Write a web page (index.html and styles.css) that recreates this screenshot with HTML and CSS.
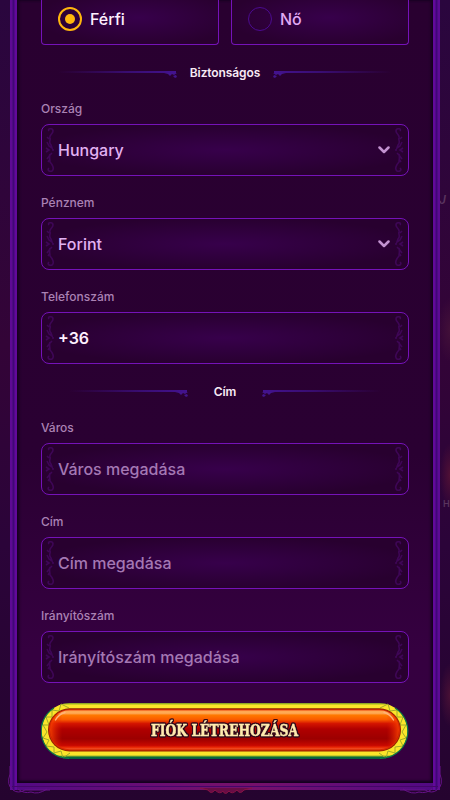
FILE: index.html
```html
<!DOCTYPE html>
<html lang="hu">
<head>
<meta charset="utf-8">
<title>Fiók létrehozása</title>
<link rel="stylesheet" href="styles.css">
</head>
<body>
<svg class="defs" aria-hidden="true">
  <symbol id="scroll" viewBox="0 0 10 44">
    <path d="M4 3C2 0 8 0 8 3C8 6 4 7 5 10C6 12 3 14 6 17L7 20L4 18L2 14M4 11L2 9M1 20L4 22L1 24M7 22H9M7 25L5 27L2 31M5 26C4 29 5 32 5 34C7 36 10 41 7 43C4 44 2 42 4 40M5 31L3 34"/>
  </symbol>
  <symbol id="chevron" viewBox="0 0 12 8"><path d="M1.500 1.500L6 6L10.500 1.500"/></symbol>
  <symbol id="rule" viewBox="0 0 120 7">
    <rect width="118" height="2" fill="url(#fade)"/>
    <path d="M106 2H119L116 4L114 3L112 5L110 3ZM115 5L118 4L119 6L117 7Z" fill="#43148c"/>
  </symbol>
  <linearGradient id="fade"><stop offset="0" stop-color="#3d1082" stop-opacity="0"/><stop offset=".6" stop-color="#3d1082" stop-opacity=".8"/><stop offset="1" stop-color="#431290"/></linearGradient>
</svg>
<span class="ghost ghost-one">J</span><span class="ghost ghost-two">H</span>
<main class="frame">
  <form class="panel">
    <div class="choices">
      <div class="choice selected"><span class="radio"></span>Férfi</div>
      <div class="choice"><span class="radio"></span>Nő</div>
    </div>
    <h2 class="section"><svg><use href="#rule"/></svg><span>Biztonságos</span><svg class="flip"><use href="#rule"/></svg></h2>
    <div class="group">
      <div class="label">Ország</div>
      <div class="field"><svg class="scroll left"><use href="#scroll"/></svg><span>Hungary</span><svg class="chevron"><use href="#chevron"/></svg><svg class="scroll right"><use href="#scroll"/></svg></div>
    </div>
    <div class="group">
      <div class="label">Pénznem</div>
      <div class="field"><svg class="scroll left"><use href="#scroll"/></svg><span>Forint</span><svg class="chevron"><use href="#chevron"/></svg><svg class="scroll right"><use href="#scroll"/></svg></div>
    </div>
    <div class="group">
      <div class="label">Telefonszám</div>
      <div class="field phone"><svg class="scroll left"><use href="#scroll"/></svg><span>+36</span><svg class="scroll right"><use href="#scroll"/></svg></div>
    </div>
    <h2 class="section address"><svg><use href="#rule"/></svg><span>Cím</span><svg class="flip"><use href="#rule"/></svg></h2>
    <div class="group">
      <div class="label">Város</div>
      <div class="field empty"><svg class="scroll left"><use href="#scroll"/></svg><span>Város megadása</span><svg class="scroll right"><use href="#scroll"/></svg></div>
    </div>
    <div class="group">
      <div class="label">Cím</div>
      <div class="field empty"><svg class="scroll left"><use href="#scroll"/></svg><span>Cím megadása</span><svg class="scroll right"><use href="#scroll"/></svg></div>
    </div>
    <div class="group">
      <div class="label">Irányítószám</div>
      <div class="field empty"><svg class="scroll left"><use href="#scroll"/></svg><span>Irányítószám megadása</span><svg class="scroll right"><use href="#scroll"/></svg></div>
    </div>
    <div class="submit">
      <svg viewBox="0 0 368 56" width="368" height="56">
        <defs>
          <linearGradient id="rim" x2="0" y2="1"><stop offset="0" stop-color="#7d9c26"/><stop offset=".02" stop-color="#a8b822"/><stop offset=".035" stop-color="#fbe52a"/><stop offset=".93" stop-color="#fbe52a"/><stop offset=".95" stop-color="#7ba52b"/><stop offset=".965" stop-color="#08703c"/><stop offset="1" stop-color="#065a42"/></linearGradient>
          <linearGradient id="red" x2="0" y2="1"><stop offset="0" stop-color="#ff8a3c"/><stop offset=".04" stop-color="#ffb05a"/><stop offset=".09" stop-color="#ffa04a"/><stop offset=".12" stop-color="#ff7a00"/><stop offset=".24" stop-color="#fa5a00"/><stop offset=".34" stop-color="#d41400"/><stop offset=".48" stop-color="#b00000"/><stop offset=".73" stop-color="#9c0000"/><stop offset=".9" stop-color="#c80800"/><stop offset=".96" stop-color="#ee3008"/><stop offset="1" stop-color="#f05a30"/></linearGradient>
          <linearGradient id="ends"><stop offset="0" stop-color="#ff4a00"/><stop offset=".035" stop-color="#e51d00" stop-opacity="0"/><stop offset=".965" stop-color="#e51d00" stop-opacity="0"/><stop offset="1" stop-color="#ff4a00"/></linearGradient>
        </defs>
        <rect x=".5" width="366" height="56" rx="28" fill="url(#rim)"/>
        <path class="lattice" d="M28 5L20 1L18 8L11 7L11 14L5 14L8 22L2 22L6 29L2 35L8 37L5 43L13 44L13 50L20 48L22 55L29 50M339 5L347 1L349 8L356 7L356 14L362 14L359 22L365 22L361 29L365 35L359 37L362 43L354 44L354 50L347 48L345 55L338 50"/>
        <path d="M13 5A27.200 27.200 0 0 0 28 55.300M354 5A27.200 27.200 0 0 1 339 55.300" fill="none" stroke="#0b7a47" stroke-width="1.200"/>
        <rect x="7" y="5.300" width="353" height="43.200" rx="21.600" fill="#8f2400"/>
        <rect x="7.800" y="6.200" width="351.400" height="41.400" rx="20.700" fill="#d92a00"/>
        <rect x="9" y="7.300" width="349" height="39" rx="19.500" fill="url(#red)"/>
        <rect x="9" y="7.300" width="349" height="39" rx="19.500" fill="url(#ends)" opacity=".8"/>
        <path d="M14.500 17Q18 11 24 9.500M352.500 17Q349 11 343 9.500" fill="none" stroke="#ffb27a" stroke-width="1.400" stroke-linecap="round"/>
        <text x="110" y="33.200" textLength="147" lengthAdjust="spacingAndGlyphs">FIÓK LÉTREHOZÁSA</text>
      </svg>
    </div>
  </form>
  <svg class="trim" viewBox="0 0 450 50" aria-hidden="true">
    <path class="side" d="M10 20V28Q6 39 13 44Q18 48 25 44H50M440 20V28Q444 39 437 44Q432 48 425 44H400"/>
    <path class="side" d="M18 43Q24 48 31 46Q38 49 47 43M432 43Q426 48 419 46Q412 49 403 43"/>
    <path class="crest" d="M200 42L208 44Q211 49 215 44Q220 49 223 45Q225 50 229 45Q232 49 237 44Q240 49 244 44L252 42"/>
  </svg>
</main>
</body>
</html>
```
FILE: styles.css
```css
* { box-sizing: border-box; }
html { overflow: hidden; }
body {
  margin: 0;
  position: relative;
  width: 450px;
  height: 800px;
  overflow: hidden;
  background:
    radial-gradient(ellipse 12px 32px at 450px 330px, #421039, transparent),
    radial-gradient(ellipse 10px 32px at 450px 475px, #501035, transparent),
    radial-gradient(ellipse 10px 32px at 450px 695px, #481035, transparent),
    linear-gradient(#2a063e, #330437 43%, #2b0439 68%, #25042f);
  font-family: Inter, "Noto Sans", sans-serif;
}
.defs { position: absolute; width: 0; height: 0; }
.frame {
  position: relative;
  width: 430px;
  height: 790px;
  margin-left: 10px;
  padding: 0 7px 7px;
  background: linear-gradient(90deg, #5c0a94 0 2px, #400777 3px 4px, #62099b 5px 7px, transparent 7px 423px, #62099b 423px 425px, #400777 426px 427px, #5c0a94 428px), linear-gradient(90deg, #520985, #73106c 48%, #75106b 57%, #500985);
}
.frame::after {
  content: "";
  position: absolute;
  left: 2px; right: 2px; bottom: 3px;
  height: 1px;
  background: #430668;
}
.panel {
  height: 783px;
  margin: 0;
  padding: 0 24px;
  background: linear-gradient(#290030, #2a0032 58%, #350040 83%, #35003f);
  box-shadow: inset 2px 0 3px #16001f, inset -2px 0 3px #16001f, inset 0 -2px 3px #17001f;
}
.choices { display: flex; gap: 12px; height: 45px; }
.choice {
  flex: 1;
  display: flex;
  align-items: center;
  gap: 8px;
  height: 45px;
  padding: 0 0 6px 16px;
  border: 1px solid #7512b8;
  border-top: 0;
  border-radius: 0 0 4px 4px;
  background: radial-gradient(ellipse at 55% 40%, #37004b, #29002f 75%);
  color: #e0a9f3;
  font-size: 16px;
  font-weight: 500;
}
.selected { color: #fff0ff; }
.radio {
  display: flex;
  width: 24px;
  height: 24px;
  border: 1px solid #4b0b90;
  border-radius: 50%;
  align-items: center;
  justify-content: center;
}
.selected .radio { border: 2px solid #ffb60d; }
.selected .radio::after {
  content: "";
  width: 10px;
  height: 10px;
  border-radius: 50%;
  background: #ffb60d;
}
.section {
  display: flex;
  justify-content: center;
  align-items: center;
  gap: 12px;
  height: 16px;
  margin: 20px 0 19px;
  color: #f7eaf4;
  font-size: 12px;
  line-height: 16px;
  font-weight: 600;
  letter-spacing: -.1px;
}
.section svg { width: 120px; height: 7px; margin-top: 2px; }
.section .flip { transform: scaleX(-1); }
.address { gap: 25px; }
.group { height: 76px; margin-bottom: 18px; }
.label {
  height: 24px;
  color: #aa82b4;
  font-size: 12px;
  font-weight: 500;
  line-height: 18px;
}
.field {
  position: relative;
  display: flex;
  align-items: center;
  justify-content: space-between;
  height: 52px;
  padding: 0 18px 0 16px;
  border: 1px solid #7512b8;
  border-radius: 8px;
  background: radial-gradient(ellipse at center, #37004b, #28002f 75%);
  color: #e2b1f2;
  font-size: 16px;
  font-weight: 500;
}
.phone { color: #fff0ff; font-weight: 600; }
.empty { color: #a478b3; font-weight: 450; }
.chevron { width: 12px; height: 8px; fill: none; stroke: #c292d0; stroke-width: 2.5; stroke-linecap: round; stroke-linejoin: round; }
.scroll { position: absolute; top: 3px; width: 10px; height: 44px; fill: none; stroke: #480967; stroke-width: 1.6; opacity: .7; }
.scroll.left { left: 3px; }
.scroll.right { right: 4px; transform: scaleX(-1); }
.submit { height: 56px; margin-top: 20px; }
.submit svg { display: block; }
.submit text {
  font: bold 16px "DejaVu Serif", serif;
  fill: #ffebaf;
  stroke: #ffebaf;
  stroke-width: .5px;
  filter: drop-shadow(1px 0 0 #30091a) drop-shadow(-1px 0 0 #30091a) drop-shadow(0 1px 0 #30091a) drop-shadow(0 -1px 0 #30091a);
}
.lattice { fill: none; stroke: #a0ab28; stroke-width: 1; }
.trim { position: absolute; left: -10px; top: 746px; width: 450px; height: 50px; fill: none; }
.trim .side { stroke: #67128a; }
.trim .crest { stroke: #871343; fill: #680c46; }
.ghost { position: absolute; color: #59345e; font-weight: 600; }
.ghost-one { left: 439px; top: 192px; font-size: 12px; font-style: italic; }
.ghost-two { left: 443px; top: 498px; font-size: 9px; }
```
